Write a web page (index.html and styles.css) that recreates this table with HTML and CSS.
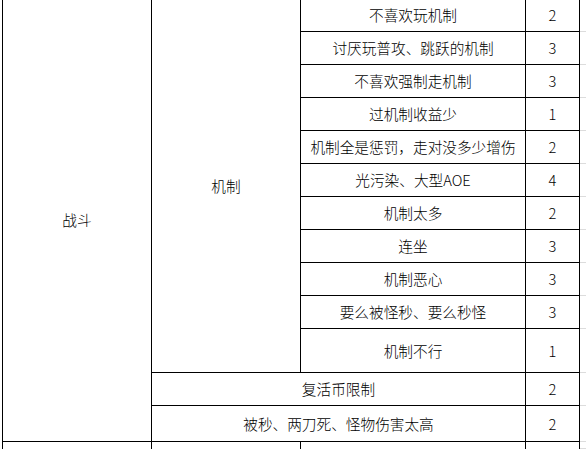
FILE: index.html
```html
<!DOCTYPE html>
<html lang="zh-CN">
<head>
<meta charset="utf-8">
<link rel="stylesheet" href="styles.css">
</head>
<body>
<table class="sheet">
  <colgroup>
    <col class="c1"><col class="c2"><col class="c3"><col class="c4"><col class="cx">
  </colgroup>
  <tr class="r">
    <td rowspan="13">战斗</td>
    <td rowspan="11">机制</td>
    <td>不喜欢玩机制</td><td>2</td><td class="gx"></td>
  </tr>
  <tr class="r"><td>讨厌玩普攻、跳跃的机制</td><td>3</td><td class="gx"></td></tr>
  <tr class="r"><td>不喜欢强制走机制</td><td>3</td><td class="gx"></td></tr>
  <tr class="r"><td>过机制收益少</td><td>1</td><td class="gx"></td></tr>
  <tr class="r"><td>机制全是惩罚，走对没多少增伤</td><td>2</td><td class="gx"></td></tr>
  <tr class="r"><td>光污染、大型AOE</td><td>4</td><td class="gx"></td></tr>
  <tr class="r"><td>机制太多</td><td>2</td><td class="gx"></td></tr>
  <tr class="r"><td>连坐</td><td>3</td><td class="gx"></td></tr>
  <tr class="r"><td>机制恶心</td><td>3</td><td class="gx"></td></tr>
  <tr class="r"><td>要么被怪秒、要么秒怪</td><td>3</td><td class="gx"></td></tr>
  <tr class="r tall"><td>机制不行</td><td>1</td><td class="gx"></td></tr>
  <tr class="r"><td colspan="2">复活币限制</td><td>2</td><td class="gx"></td></tr>
  <tr class="r mid"><td colspan="2">被秒、两刀死、怪物伤害太高</td><td>2</td><td class="gx"></td></tr>
  <tr class="r last"><td></td><td></td><td></td><td></td><td class="gx"></td></tr>
</table>
</body>
</html>
```
FILE: styles.css
```css
html, body {
  margin: 0;
  padding: 0;
  background: #fff;
  overflow: hidden;
}
.sheet {
  border-collapse: collapse;
  table-layout: fixed;
  width: 585px;
  margin: -2px 0 0 2px;
  font-family: "Noto Sans CJK SC", "Noto Sans", sans-serif;
  font-size: 14.67px;
  font-weight: 300;
  color: #000;
}
.c1 { width: 149px; }
.c2 { width: 149px; }
.c3 { width: 225px; }
.c4 { width: 54px; }
.cx { width: 8px; }
.sheet td {
  border: 1px solid #000;
  padding: 0;
  text-align: center;
  vertical-align: middle;
  line-height: 18px;
  white-space: nowrap;
}
.r td { height: 32px; }
.r.tall td { height: 43px; }
.r.mid td { height: 35px; }
.r.last td { height: 6px; line-height: 6px; border-bottom: none; }
.sheet td.gx {
  border-top: 1px solid #dcdcdc;
  border-bottom: 1px solid #dcdcdc;
  border-right: none;
}
```
